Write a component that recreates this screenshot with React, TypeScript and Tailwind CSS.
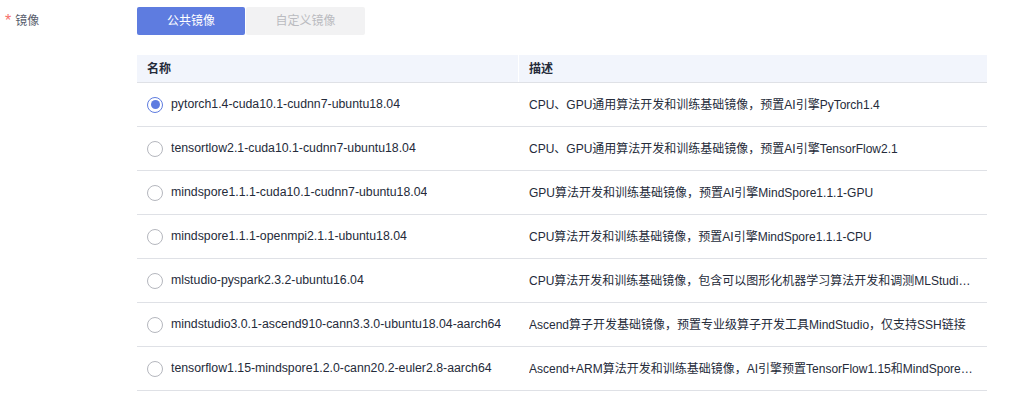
const rows = [
  {
    name: "pytorch1.4-cuda10.1-cudnn7-ubuntu18.04",
    desc: "CPU、GPU通用算法开发和训练基础镜像，预置AI引擎PyTorch1.4",
  },
  {
    name: "tensortlow2.1-cuda10.1-cudnn7-ubuntu18.04",
    desc: "CPU、GPU通用算法开发和训练基础镜像，预置AI引擎TensorFlow2.1",
  },
  {
    name: "mindspore1.1.1-cuda10.1-cudnn7-ubuntu18.04",
    desc: "GPU算法开发和训练基础镜像，预置AI引擎MindSpore1.1.1-GPU",
  },
  {
    name: "mindspore1.1.1-openmpi2.1.1-ubuntu18.04",
    desc: "CPU算法开发和训练基础镜像，预置AI引擎MindSpore1.1.1-CPU",
  },
  {
    name: "mlstudio-pyspark2.3.2-ubuntu16.04",
    desc: "CPU算法开发和训练基础镜像，包含可以图形化机器学习算法开发和调测MLStudio工具，并预置PySpark2.3.2",
  },
  {
    name: "mindstudio3.0.1-ascend910-cann3.3.0-ubuntu18.04-aarch64",
    desc: "Ascend算子开发基础镜像，预置专业级算子开发工具MindStudio，仅支持SSH链接",
  },
  {
    name: "tensorflow1.15-mindspore1.2.0-cann20.2-euler2.8-aarch64",
    desc: "Ascend+ARM算法开发和训练基础镜像，AI引擎预置TensorFlow1.15和MindSpore1.2.0",
  },
];

const Radio = ({ checked }: { checked: boolean }) =>
  checked ? (
    <span className="flex h-[16px] w-[16px] shrink-0 items-center justify-center rounded-full border border-[#5e7ce0]">
      <span className="h-[9px] w-[9px] rounded-full bg-[#5e7ce0]" />
    </span>
  ) : (
    <span className="h-[16px] w-[16px] shrink-0 rounded-full border border-[#b5b7be]" />
  );

export default function App() {
  return (
    <div
      className="h-[398px] w-[1022px] bg-white text-[12px] text-[#252b3a]"
      style={{ fontFamily: '"Liberation Sans", "Noto Sans CJK SC", sans-serif' }}
    >
      <div className="flex">
        {/* label */}
        <div className="flex w-[137px] shrink-0 items-start pl-[5px] pt-[12px]">
          <span className="mr-[4px] text-[16px] leading-[18px] text-[#f66f6a]">*</span>
          <span className="pt-[1px] text-[12px] leading-[16px] text-[#575d6c]">镜像</span>
        </div>

        <div className="w-[850px] pt-[7px]">
          {/* tabs */}
          <div className="flex gap-[1px]">
            <div className="flex h-[28px] w-[108px] items-center justify-center rounded-[2px] bg-[#5e7ce0] text-white">
              公共镜像
            </div>
            <div className="flex h-[28px] w-[119px] items-center justify-center rounded-[2px] bg-[#f2f2f3] text-[#babbc0]">
              自定义镜像
            </div>
          </div>

          {/* table */}
          <div className="mt-[20px]">
            <div className="flex h-[28px] border-b border-[#dfe1e6] bg-[#f2f5fc] font-bold">
              <div className="flex w-[382px] items-center border-r border-white pl-[10px]">名称</div>
              <div className="flex flex-1 items-center pl-[10px]">描述</div>
            </div>
            {rows.map((r, i) => (
              <div key={r.name} className="flex h-[44px] border-b border-[#dfe1e6]">
                <div className="flex w-[382px] items-center gap-[8px] pl-[10px]">
                  <Radio checked={i === 0} />
                  <span className="truncate text-[12.3px]">{r.name}</span>
                </div>
                <div className="flex min-w-0 flex-1 items-center pl-[10px] pr-[14px]">
                  <span className="truncate">{r.desc}</span>
                </div>
              </div>
            ))}
          </div>
        </div>
      </div>
    </div>
  );
}
